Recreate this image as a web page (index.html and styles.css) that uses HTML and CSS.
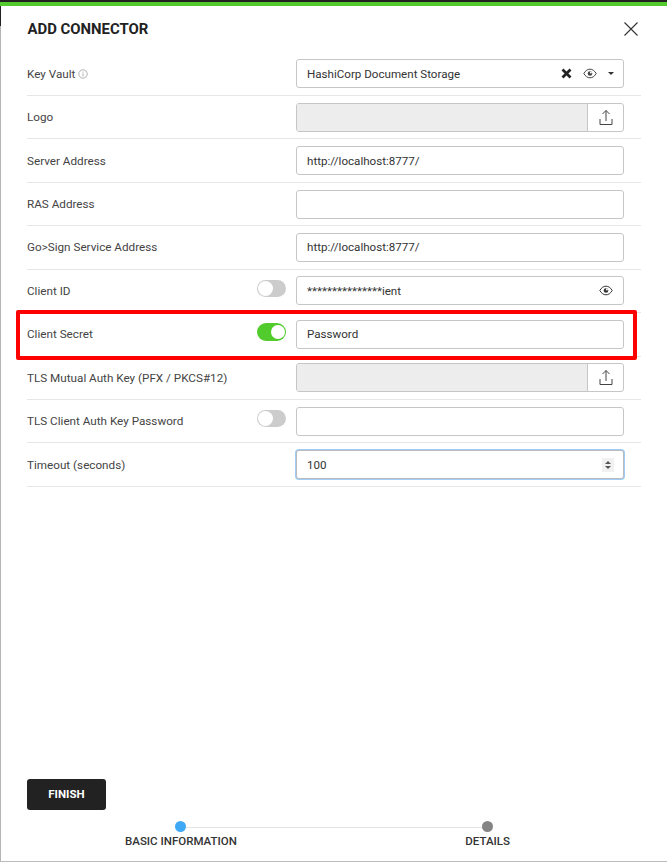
FILE: index.html
```html
<!DOCTYPE html>
<html lang="en">
<head>
<meta charset="utf-8">
<title>Add Connector</title>
<link rel="stylesheet" href="styles.css">
</head>
<body>
<div class="backdrop-edge"></div>
<main class="dialog">
  <header class="dialog-head">
    <h1 class="title">ADD CONNECTOR</h1>
    <button class="close" aria-label="Close"><svg width="16" height="16" viewBox="0 0 16 16"><path d="M1.5 1.5l13 13M14.5 1.5l-13 13" stroke="#333" stroke-width="1.1" fill="none"/></svg></button>
  </header>
  <form class="form">
    <div class="row">
      <label class="label">Key Vault <svg class="info" width="10" height="10" viewBox="0 0 10 10"><circle cx="5" cy="5" r="4.2" fill="none" stroke="#aaa" stroke-width=".9"/><path d="M5 4.4v3M5 2.6v1" stroke="#aaa" stroke-width="1"/></svg></label>
      <div class="field select">
        <span class="value grow">HashiCorp Document Storage</span>
        <svg class="ic-x" width="11" height="11" viewBox="0 0 11 11"><path d="M1.5 1.5l8 8M9.5 1.5l-8 8" stroke="#222" stroke-width="2.7" fill="none"/></svg>
        <svg class="ic-eye" width="14" height="11" viewBox="0 0 14 11"><path d="M.8 5.5C2.5 2.6 4.6 1.2 7 1.2s4.500 1.400 6.200 4.300C11.500 8.400 9.400 9.800 7 9.800S2.500 8.400.8 5.500z" fill="none" stroke="#444" stroke-width="1"/><circle cx="7" cy="5.500" r="2.300" fill="#444"/><circle cx="7.900" cy="4.600" r="1" fill="#fff"/></svg>
        <span class="caret"></span>
      </div>
    </div>
    <div class="row">
      <label class="label">Logo</label>
      <div class="field upload">
        <span class="upload-well"></span>
        <span class="upload-btn"><svg width="14" height="17" viewBox="0 0 14 17"><path d="M7 12V1.500M3.500 5L7 1.500 10.500 5M1 10v5.500h12V10" fill="none" stroke="#444" stroke-width="1"/></svg></span>
      </div>
    </div>
    <div class="row">
      <label class="label">Server Address</label>
      <div class="field"><span class="value">http://localhost:8777/</span></div>
    </div>
    <div class="row">
      <label class="label">RAS Address</label>
      <div class="field"></div>
    </div>
    <div class="row">
      <label class="label">Go&gt;Sign Service Address</label>
      <div class="field"><span class="value">http://localhost:8777/</span></div>
    </div>
    <div class="row">
      <label class="label">Client ID</label>
      <span class="toggle"></span>
      <div class="field">
        <span class="value grow">***************ient</span>
        <svg class="ic-eye" width="14" height="11" viewBox="0 0 14 11"><path d="M.8 5.500C2.500 2.600 4.600 1.200 7 1.200s4.500 1.400 6.200 4.300C11.500 8.400 9.400 9.800 7 9.800S2.500 8.400.8 5.500z" fill="none" stroke="#333" stroke-width="1"/><circle cx="7" cy="5.500" r="2.300" fill="#333"/><circle cx="7.900" cy="4.600" r="1" fill="#fff"/></svg>
      </div>
    </div>
    <div class="row">
      <label class="label">Client Secret</label>
      <span class="toggle on"></span>
      <div class="field"><span class="value">Password</span></div>
    </div>
    <div class="row">
      <label class="label">TLS Mutual Auth Key (PFX / PKCS#12)</label>
      <div class="field upload">
        <span class="upload-well"></span>
        <span class="upload-btn"><svg width="14" height="17" viewBox="0 0 14 17"><path d="M7 12V1.500M3.500 5L7 1.500 10.500 5M1 10v5.500h12V10" fill="none" stroke="#444" stroke-width="1"/></svg></span>
      </div>
    </div>
    <div class="row">
      <label class="label">TLS Client Auth Key Password</label>
      <span class="toggle"></span>
      <div class="field"></div>
    </div>
    <div class="row">
      <label class="label">Timeout (seconds)</label>
      <div class="field focus">
        <span class="value grow">100</span>
        <span class="spinner"><i class="up"></i><i class="down"></i></span>
      </div>
    </div>
    <div class="highlight"></div>
  </form>
  <footer class="dialog-foot">
    <button class="finish" type="button">FINISH</button>
    <div class="stepper">
      <div class="step"><span class="dot active"></span><span class="step-name">BASIC INFORMATION</span></div>
      <div class="step"><span class="dot"></span><span class="step-name">DETAILS</span></div>
    </div>
  </footer>
</main>
</body>
</html>
```
FILE: styles.css
```css
* { box-sizing: border-box; }
html, body { height: 100%; }
body {
  margin: 0;
  background: #fff;
  font-family: Roboto, "Liberation Sans", sans-serif;
  color: #333;
  overflow: hidden;
}
.backdrop-edge {
  position: absolute;
  left: 0;
  top: 0;
  width: 1px;
  height: 862px;
  background: linear-gradient(#222 0 26px, #b5b5b5 26px);
}
.dialog {
  height: 862px;
  display: flex;
  flex-direction: column;
  border-top: 2px solid #222;
  border-bottom: 1px solid #bbb;
  position: relative;
}
.dialog::before {
  content: "";
  display: block;
  height: 4px;
  background: #52cc2d;
  flex: none;
}
.dialog-head {
  height: 46.5px;
  padding: 0 27px 1px 27.5px;
  display: flex;
  align-items: center;
  justify-content: space-between;
  flex: none;
}
.title {
  margin: 0;
  font-size: 14.9px;
  font-weight: 700;
  color: #222;
}
.close {
  border: 0;
  background: none;
  padding: 0;
  margin-right: 1px;
  display: flex;
}
.form {
  margin: 0 26px 0 27px;
  position: relative;
  flex: none;
}
.row {
  height: 43.45px;
  display: flex;
  align-items: center;
  border-bottom: 1px solid #e6e6e6;
  position: relative;
  padding-right: 17px;
}
.label {
  font-size: 11.7px;
  color: #444;
  position: absolute;
  left: 0;
  top: 50%;
  transform: translateY(-50%);
}
.info { vertical-align: -1px; margin-left: 0; }
.toggle {
  position: absolute;
  left: 230px;
  top: 10px;
  width: 29px;
  height: 17px;
  border-radius: 9px;
  background: #ccc;
}
.toggle::after {
  content: "";
  position: absolute;
  left: 1px;
  top: 1px;
  width: 15px;
  height: 15px;
  border-radius: 50%;
  background: #fff;
}
.toggle.on { background: #52cc2d; height: 18px; }
.toggle.on::after { left: 14px; width: 14px; height: 14px; top: 2px; }
.field {
  margin-left: 269px;
  width: 328px;
  height: 29px;
  border: 1px solid #c6c6c6;
  border-radius: 3px;
  background: #fff;
  display: flex;
  align-items: center;
  padding: 0 10px;
  font-size: 11.6px;
  color: #333;
}
.value { white-space: nowrap; }
.grow { flex: 1; }
.select { padding-right: 9px; }
.ic-x { margin-right: 11px; flex: none; }
.ic-eye { flex: none; }
.select .ic-eye { margin-right: 11px; }
.caret {
  width: 0;
  height: 0;
  border-left: 3px solid transparent;
  border-right: 3px solid transparent;
  border-top: 3px solid #333;
}
.upload { padding: 0; overflow: hidden; }
.upload-well { flex: 1; height: 100%; background: #ededed; border-right: 1px solid #c6c6c6; }
.upload-btn { width: 35px; height: 100%; display: flex; align-items: center; justify-content: center; }
.focus {
  border-color: #bbb;
  box-shadow: 0 0 0 1px #9fcdf7;
  padding-right: 9px;
}
.spinner {
  width: 12px;
  height: 14px;
  background: #f1f1f1;
  display: flex;
  flex-direction: column;
  align-items: center;
  justify-content: center;
  gap: 2px;
}
.spinner i { width: 0; height: 0; border-left: 3.5px solid transparent; border-right: 3.5px solid transparent; }
.spinner .up { border-bottom: 3.5px solid #555; }
.spinner .down { border-top: 3.5px solid #555; }
.highlight {
  position: absolute;
  left: -11px;
  top: 257.5px;
  width: 621px;
  height: 50px;
  border: 4px solid #f00;
  border-radius: 2px;
  pointer-events: none;
}
.dialog-foot {
  margin-top: auto;
  padding: 0 27px;
  flex: none;
  height: 82px;
}
.finish {
  display: block;
  width: 79px;
  height: 31px;
  border: 0;
  border-radius: 3px;
  padding: 0 0 2px;
  background: #222;
  color: #fff;
  font: 700 11.5px Roboto, "Liberation Sans", sans-serif;
}
.stepper {
  margin: 11px 0 0 0;
  display: flex;
  justify-content: space-between;
  padding: 0 130px 0 98px;
  position: relative;
  background: linear-gradient(#e3e3e3, #e3e3e3) no-repeat 153px 6px / 307px 1px;
}
.step {
  display: flex;
  flex-direction: column;
  align-items: center;
  gap: 2px;
}
.dot {
  width: 11px;
  height: 11px;
  border-radius: 50%;
  background: #848484;
}
.dot.active { background: #3fa9f5; }
.step-name {
  font-size: 11.5px;
  font-weight: 500;
  color: #333;
}
```
